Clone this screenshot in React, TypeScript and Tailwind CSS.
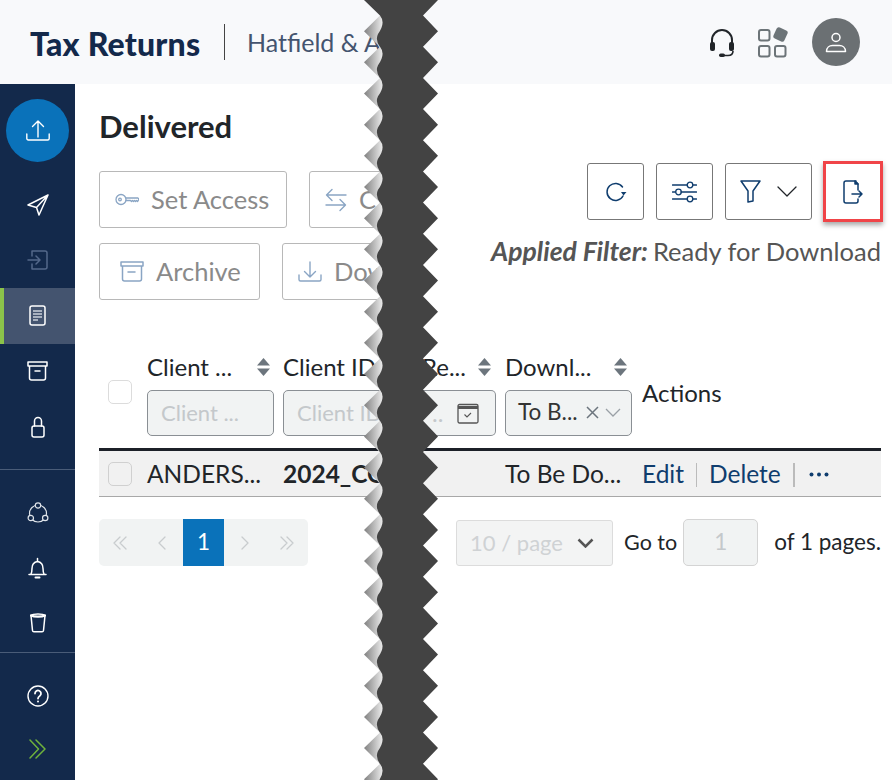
const font = "font-['Lato','Liberation_Sans',sans-serif]";

function Ico({ w, h, vb, color = "#fff", sw = 1.5, children }: { w: number; h: number; vb?: string; color?: string; sw?: number; children: React.ReactNode }) {
  return (
    <svg width={w} height={h} viewBox={vb ?? `0 0 ${w} ${h}`} fill="none" stroke={color} strokeWidth={sw} strokeLinecap="round" strokeLinejoin="round" className="shrink-0">
      {children}
    </svg>
  );
}

function SortIcon() {
  return (
    <svg width="13" height="18" viewBox="0 0 13 18" fill="#6c757d" className="shrink-0">
      <path d="M6.5 0L13 7.5H0z" />
      <path d="M6.5 18L13 10.5H0z" />
    </svg>
  );
}

function Torn() {
  const p = 31.17;
  let right = "M364 0H438";
  let left = "";
  const tris: string[] = [];
  for (let k = 0; k < 26; k++) {
    const t = k * p;
    right += `L423 ${t + 15.6}L438 ${t + p}`;
  }
  right += "V780";
  for (let k = 25; k >= 0; k--) {
    const t = k * p;
    left += `L380 ${t + 47}Q375 ${t + 40} 378 ${t + 34}Q386 ${t + 23} 380 ${t + 15.6}`;
    tris.push(`M364 ${t + p}L380 ${t + 15.6}L388 ${t + 15.6}V${t + 47}H380z`);
  }
  return (
    <svg width="892" height="780" viewBox="0 0 892 780" className="absolute top-0 left-0 pointer-events-none">
      <defs>
        <linearGradient id="tear" gradientUnits="userSpaceOnUse" x1="364" y1="0" x2="384" y2="0">
          <stop offset="0" stopColor="#808080" />
          <stop offset="1" stopColor="#f4f4f4" />
        </linearGradient>
      </defs>
      <path d={tris.join("")} fill="url(#tear)" />
      <path d={`${right}H380${left}L364 0z`} fill="#434343" />
    </svg>
  );
}

function SideRow({ active, children }: { active?: boolean; children: React.ReactNode }) {
  return (
    <div className={`h-[55.5px] flex items-center justify-center ${active ? "bg-[#44546f] border-l-4 border-[#8bc34a] pr-1" : ""}`}>
      {children}
    </div>
  );
}

function Sidebar() {
  return (
    <div className="w-[75px] bg-[#13294b] flex flex-col shrink-0 pt-[15px]">
      <div className="w-[63px] h-[63px] rounded-full bg-[#0a72ba] mx-[6px] mb-[15px] flex items-center justify-center">
        <Ico w={24} h={21} sw={1.4}>
          <path d="M12 17V1M6.500 6.500L12 1l5.500 5.500M.8 14v4.500a1.500 1.500 0 001.500 1.500h19.400a1.500 1.500 0 001.500-1.500V14" />
        </Ico>
      </div>
      <SideRow>
        <Ico w={22} h={22}>
          <path d="M21 1L1 11l8.500 2.500L12 21zM21 1L9.500 13.500" />
        </Ico>
      </SideRow>
      <SideRow>
        <Ico w={21} h={20} color="#54688a">
          <path d="M5 1h13a2 2 0 012 2v14a2 2 0 01-2 2H5v-5M5 6V1M1 10h12M9 6l4 4-4 4" />
        </Ico>
      </SideRow>
      <SideRow active>
        <Ico w={17} h={21}>
          <rect x="1" y="1" width="15" height="19" rx="2" />
          <path d="M4 6h9M4 9h9M4 12h9M4 15h5" strokeWidth="1.500" stroke="#c9d0da" strokeLinecap="butt" />
        </Ico>
      </SideRow>
      <SideRow>
        <Ico w={21} h={20}>
          <path d="M1 1h19v4H1zM2.500 5v12a2 2 0 002 2h12a2 2 0 002-2V5M8 10h5" />
        </Ico>
      </SideRow>
      <SideRow>
        <Ico w={14} h={22}>
          <path d="M3.500 10V5a3.500 3.500 0 017 0v5" />
          <rect x="1" y="10" width="12" height="11" rx="2" />
        </Ico>
      </SideRow>
      <div className="h-px bg-[#4a5c78] mt-[14px]" />
      <div className="h-[16px]" />
      <div className="h-[55px] flex items-center justify-center">
        <Ico w={22} h={22} vb="0 0 22 22" sw={1.200} color="#dfe4ea">
          <circle cx="11" cy="11.500" r="8.500" />
          <circle cx="11" cy="3.500" r="2.700" fill="#13294b" />
          <circle cx="3.800" cy="16" r="2.700" fill="#13294b" />
          <circle cx="18.200" cy="16" r="2.700" fill="#13294b" />
        </Ico>
      </div>
      <div className="h-[55px] flex items-center justify-center">
        <Ico w={19} h={22}>
          <path d="M1 17.500h17M2.800 17.500c1-1.500 1.200-3 1.200-6 0-3.500 2-6.500 5.500-7 3.500.5 5.500 3.500 5.500 7 0 3 .2 4.500 1.200 6M9.500 1.500v3" />
          <path d="M7.500 20.500h4" strokeWidth="2" />
        </Ico>
      </div>
      <div className="h-[55px] flex items-center justify-center">
        <Ico w={16} h={20}>
          <path d="M1 2.500c2-2 12-2 14 0l-1.500 15a1.500 1.500 0 01-1.500 1.300H4a1.500 1.500 0 01-1.500-1.300z" />
          <path d="M1 2.500c3 1.500 11 1.500 14 0" strokeWidth="2.200" />
        </Ico>
      </div>
      <div className="h-px bg-[#4a5c78] mt-[1px]" />
      <div className="h-[16px]" />
      <div className="h-[55px] flex items-center justify-center">
        <svg width="22" height="22" viewBox="0 0 22 22" fill="none" stroke="#fff" strokeWidth="1.400" strokeLinecap="round">
          <circle cx="11" cy="11" r="10" />
          <path d="M8 8.500a3 3 0 115 2.200c-1.200.9-2 1.400-2 2.800" strokeWidth="1.800" />
          <circle cx="11" cy="16.500" r="1" fill="#fff" stroke="none" />
        </svg>
      </div>
      <div className="h-[50px] flex items-center justify-center">
        <Ico w={17} h={20} color="#6fb23c" sw={1.500}>
          <path d="M1 1l8.500 9L1 19M7 1l9 9-9 9" />
        </Ico>
      </div>
    </div>
  );
}

function Header() {
  return (
    <div className="h-[84px] bg-[#f8f9fb] flex items-center pl-[30px] pr-[32px] shrink-0">
      <div className="text-[32px] leading-none font-black text-[#13294b] w-[194px] tracking-[0.2px] whitespace-nowrap mt-[4px]">Tax Returns</div>
      <div className="w-px h-[36px] bg-[#444] -mt-[1px]" />
      <div className="ml-[22px] text-[25px] leading-none text-[#44546f] whitespace-nowrap">Hatfield &amp; A</div>
      <div className="ml-auto flex items-center">
        <svg width="26" height="29" viewBox="0 0 26 29" fill="none" stroke="#212529" strokeWidth="2" className="mr-[23px] mt-[3px]">
          <path d="M3 14v-3a10 10 0 0120 0v3" />
          <rect x="1" y="13" width="5" height="9" rx="2" fill="#212529" stroke="none" />
          <rect x="20" y="13" width="5" height="9" rx="2" fill="#212529" stroke="none" />
          <path d="M24 22c0 3-2 4.500-5 4.500h-4" strokeWidth="1.600" />
          <rect x="10" y="24.500" width="6" height="3.500" rx="1.700" fill="#212529" stroke="none" />
        </svg>
        <svg width="31" height="31" viewBox="0 0 31 31" fill="none" stroke="#6c7478" strokeWidth="2" className="mr-[23px] mt-[1px]">
          <rect x="1" y="3" width="10.500" height="10.500" rx="2" />
          <rect x="1" y="19" width="10.500" height="10.500" rx="2" />
          <rect x="17" y="19" width="10.500" height="10.500" rx="2" />
          <rect x="17.500" y="2.500" width="10" height="10" rx="1.500" fill="#6c7478" transform="rotate(25 22.500 7.500)" />
        </svg>
        <div className="w-[48px] h-[48px] rounded-full bg-[#6b7073] flex items-center justify-center">
          <Ico w={22} h={21} sw={1.500}>
            <circle cx="11" cy="5.500" r="4" />
            <path d="M1.500 19.500c0-4 3-6 6-6h7c3 0 6 2 6 6z" />
          </Ico>
        </div>
      </div>
    </div>
  );
}

function ActionButton({ icon, label, w }: { icon: React.ReactNode; label: string; w: string }) {
  return (
    <div className={`h-[57px] border border-[#b8b8b8] rounded-[3px] flex items-center pl-[15px] gap-[12px] overflow-hidden ${w}`}>
      {icon}
      <span className="text-[25.5px] leading-none text-[#8a8a8a] whitespace-nowrap">{label}</span>
    </div>
  );
}

function Toolbar() {
  const muted = "#8aa5c4";
  return (
    <div className="flex justify-between">
      <div className="flex flex-col gap-[15px] mt-[8px]">
        <div className="flex gap-[22px]">
          <ActionButton
            w="w-[188px]"
            label="Set Access"
            icon={
              <Ico w={24} h={13} color={muted} sw={1.300}>
                <circle cx="6" cy="6.500" r="5" />
                <circle cx="5" cy="6.500" r="1.300" />
                <path d="M11 5h12l1 1.500-1.500 2-1-1-1 1-1-1-1 1-1-1-1 1-1-1H11" />
              </Ico>
            }
          />
          <ActionButton
            w="w-[108px]"
            label="C"
            icon={
              <Ico w={22} h={24} color={muted} sw={1.400}>
                <path d="M21 7H1.500M7 1.500L1.500 7 7 12.500M1 17h19.500M15 11.500l5.500 5.500-5.500 5.500" />
              </Ico>
            }
          />
        </div>
        <div className="flex gap-[22px]">
          <ActionButton
            w="w-[161px]"
            label="Archive"
            icon={
              <span className="ml-[5px]">
                <Ico w={24} h={21} color={muted} sw={1.500}>
                  <path d="M1 1h22v4H1zM2.500 5v13a2 2 0 002 2h15a2 2 0 002-2V5M8 11h7" />
                </Ico>
              </span>
            }
          />
          <ActionButton
            w="w-[135px]"
            label="Dow"
            icon={
              <Ico w={24} h={21} color={muted} sw={1.400}>
                <path d="M12 1v15M6.500 10.500L12 16l5.500-5.500M1 14v4.500A1.500 1.500 0 002.500 20h19a1.500 1.500 0 001.500-1.500V14" />
              </Ico>
            }
          />
        </div>
      </div>
      <div className="flex flex-col items-end">
        <div className="flex items-start">
          <div className="w-[57px] h-[57px] border border-[#777] rounded-[3px] flex items-center justify-center">
            <Ico w={22} h={20} color="#0f3d6e" sw={1.500}>
              <path d="M17.500 5A8.500 8.500 0 1018 14" />
              <path d="M16 10h5.500L18.500 13.500z" fill="#0f3d6e" stroke="none" />
            </Ico>
          </div>
          <div className="w-[57px] h-[57px] border border-[#777] rounded-[3px] ml-[12px] flex items-center justify-center">
            <Ico w={25} h={22} color="#0f3d6e" sw={1.300}>
              <path d="M.5 4h15M21 4h3.500M.5 11h3M9 11h15.500M.5 18h15M21 18h3.500" />
              <circle cx="18" cy="4" r="2.800" />
              <circle cx="6.500" cy="11" r="2.800" />
              <circle cx="18" cy="18" r="2.800" />
            </Ico>
          </div>
          <div className="w-[87px] h-[57px] border border-[#777] rounded-[3px] ml-[12px] flex items-center pl-[14px]">
            <Ico w={21} h={23} color="#0f3d6e" sw={1.500}>
              <path d="M1 1h19l-7 10v10l-5 1V11z" />
            </Ico>
            <span className="ml-[16px]">
              <Ico w={20} h={11} color="#212529" sw={1.300}>
                <path d="M1 1l9 9 9-9" />
              </Ico>
            </span>
          </div>
          <div className="w-[60px] h-[61px] border-[3px] border-[#f04448] ml-[11px] -mr-[2px] -mt-[2px] flex items-center justify-center shadow-[0_3px_5px_rgba(0,0,0,0.35)]">
            <Ico w={20} h={24} color="#0f3d6e" sw={1.500}>
              <path d="M13 1H3a2 2 0 00-2 2v18a2 2 0 002 2h10a2 2 0 002-2v-2M15 10V4l-3-3" />
              <path d="M12 1l3 3h-3z" fill="#0f3d6e" />
              <path d="M9 14h10M16 11l3 3-3 3" />
            </Ico>
          </div>
        </div>
        <div className="text-[25.5px] leading-none text-[#555] mt-[16px] whitespace-nowrap">
          <span className="italic font-bold mr-[5px] text-[26.5px]">Applied Filter:</span>
          Ready for Download
        </div>
      </div>
    </div>
  );
}

const cols = "grid grid-cols-[48px_136px_139px_83px_137px_1fr]";

function Filter({ w, text, muted }: { w: string; text: string; muted?: boolean }) {
  return (
    <div className={`h-[46px] bg-[#f1f3f3] border border-[#8a8f94] rounded-[5px] flex items-center px-[13px] text-[22px] leading-none whitespace-nowrap overflow-hidden ${w} ${muted ? "text-[#c4c8cb]" : "text-[#333]"}`}>
      {text}
    </div>
  );
}

function Table() {
  return (
    <div>
      <div className={`${cols} h-[97px] pb-[12px] text-[24px] leading-none text-[#212529] border-b-[3px] border-[#1c2028] items-center`}>
        <div className="pl-[9px] -mt-[6px]">
          <div className="w-[24px] h-[24px] rounded-[5px] border border-[#dcdcdc] bg-white" />
        </div>
        <div className="w-[127px]">
          <div className="flex items-center justify-between pr-[4px] mb-[11px] h-[24px]">
            <span>Client ...</span>
            <SortIcon />
          </div>
          <Filter w="w-[127px]" text="Client ..." muted />
        </div>
        <div className="w-[127px]">
          <div className="flex items-center justify-between pr-[4px] mb-[11px] h-[24px]">
            <span>Client ID</span>
            <SortIcon />
          </div>
          <Filter w="w-[127px]" text="Client ID" muted />
        </div>
        <div className="w-[74px]">
          <div className="flex items-center justify-between pr-[5px] mb-[11px] h-[24px]">
            <span>Re...</span>
            <SortIcon />
          </div>
          <div className="h-[46px] bg-[#f1f3f3] border border-[#8a8f94] rounded-r-[5px] border-l-0 flex items-center justify-between pl-[10px] pr-[16px] text-[#c4c8cb]">
            <span className="leading-none">..</span>
            <svg width="22" height="22" viewBox="0 0 22 22" fill="none" stroke="#555" strokeWidth="1.300">
              <rect x="1" y="2.500" width="20" height="18.500" rx="1.500" />
              <path d="M1 5.500h20" strokeWidth="3" />
              <path d="M7.500 12.500l2.500 2.500 4-4" strokeWidth="1.100" />
            </svg>
          </div>
        </div>
        <div className="w-[127px]">
          <div className="flex items-center justify-between pr-[5px] mb-[11px] h-[24px]">
            <span>Downl...</span>
            <SortIcon />
          </div>
          <div className="h-[46px] bg-[#f1f3f3] border border-[#8a8f94] rounded-[5px] flex items-center pl-[12px] pr-[10px] text-[22.5px] text-[#333]">
            <span>To B...</span>
            <svg width="13" height="13" viewBox="0 0 13 13" className="ml-auto" fill="none" stroke="#6c757d" strokeWidth="1.500">
              <path d="M1 1l11 11M12 1L1 12" />
            </svg>
            <svg width="16" height="9" viewBox="0 0 16 9" className="ml-[6px]" fill="none" stroke="#9aa0a6" strokeWidth="1.300">
              <path d="M1 1l7 7 7-7" />
            </svg>
          </div>
        </div>
        <div className="-mt-[4px]">Actions</div>
      </div>
      <div className={`${cols} h-[46px] pt-[2px] bg-[#f1f1f1] border-b border-[#a8a8a8] items-center text-[24.5px] leading-none text-[#212529] whitespace-nowrap`}>
        <div className="pl-[9px] -mt-[2px]">
          <div className="w-[24px] h-[24px] rounded-[5px] border border-[#d0d0d0]" />
        </div>
        <div>ANDERS...</div>
        <div className="font-bold">2024_CO</div>
        <div />
        <div>To Be Do...</div>
        <div className="flex items-center text-[#0f3d6e]">
          <span>Edit</span>
          <span className="w-px h-[24px] bg-[#bbb] mx-[12px]" />
          <span>Delete</span>
          <span className="w-[2px] h-[24px] bg-[#bbb] ml-[12px] mr-[14px]" />
          <svg width="20" height="5" viewBox="0 0 20 5" fill="#0f3d6e">
            <circle cx="2.500" cy="2.500" r="2" />
            <circle cx="10" cy="2.500" r="2" />
            <circle cx="17.500" cy="2.500" r="2" />
          </svg>
        </div>
      </div>
    </div>
  );
}

function Pagination() {
  const c = "#c8ccce";
  return (
    <div className="flex items-center justify-between mt-[22px] text-[22.5px] leading-none text-[#212529]">
      <div className="h-[47px] w-[209px] bg-[#f1f3f3] rounded-[5px] flex items-center overflow-hidden">
        <div className="w-[42px] flex justify-center">
          <Ico w={14} h={14} color={c} sw={1.300}>
            <path d="M7 1L1 7l6 6M13 1L7 7l6 6" />
          </Ico>
        </div>
        <div className="w-[42px] flex justify-center">
          <Ico w={8} h={14} color={c} sw={1.300}>
            <path d="M7 1L1 7l6 6" />
          </Ico>
        </div>
        <div className="w-[41px] h-full bg-[#0a72ba] text-white flex items-center justify-center">1</div>
        <div className="w-[42px] flex justify-center">
          <Ico w={8} h={14} color={c} sw={1.300}>
            <path d="M1 1l6 6-6 6" />
          </Ico>
        </div>
        <div className="w-[42px] flex justify-center">
          <Ico w={14} h={14} color={c} sw={1.300}>
            <path d="M1 1l6 6-6 6M7 1l6 6-6 6" />
          </Ico>
        </div>
      </div>
      <div className="flex items-center">
        <div className="w-[157px] h-[46px] bg-[#f3f4f4] border border-[#dcdcdc] rounded-[3px] flex items-center pl-[13px] pr-[18px] text-[#cfd2d4] text-[22px]">
          <span>10 / page</span>
          <svg width="17" height="10" viewBox="0 0 17 10" className="ml-auto" fill="none" stroke="#555" strokeWidth="2.500">
            <path d="M1.500 1.500l7 7 7-7" />
          </svg>
        </div>
        <span className="ml-[11px] text-[21.5px]">Go to</span>
        <div className="w-[75px] h-[47px] ml-[6px] bg-[#f1f3f3] border border-[#d4d4d4] rounded-[5px] flex items-center justify-center text-[#c4c8cb]">1</div>
        <span className="ml-[16px] whitespace-nowrap">of 1 pages.</span>
      </div>
    </div>
  );
}

export default function App() {
  return (
    <div className={`relative w-[892px] h-[780px] overflow-hidden bg-white flex flex-col ${font}`}>
      <Header />
      <div className="flex flex-1">
        <Sidebar />
        <div className="flex-1 pl-[24px] pr-[11px]">
          <h1 className="text-[31px] leading-none font-bold text-[#212529] mt-[27px] mb-[21px]">Delivered</h1>
          <Toolbar />
          <div className="mt-[54px]">
            <Table />
          </div>
          <Pagination />
        </div>
      </div>
      <Torn />
    </div>
  );
}
